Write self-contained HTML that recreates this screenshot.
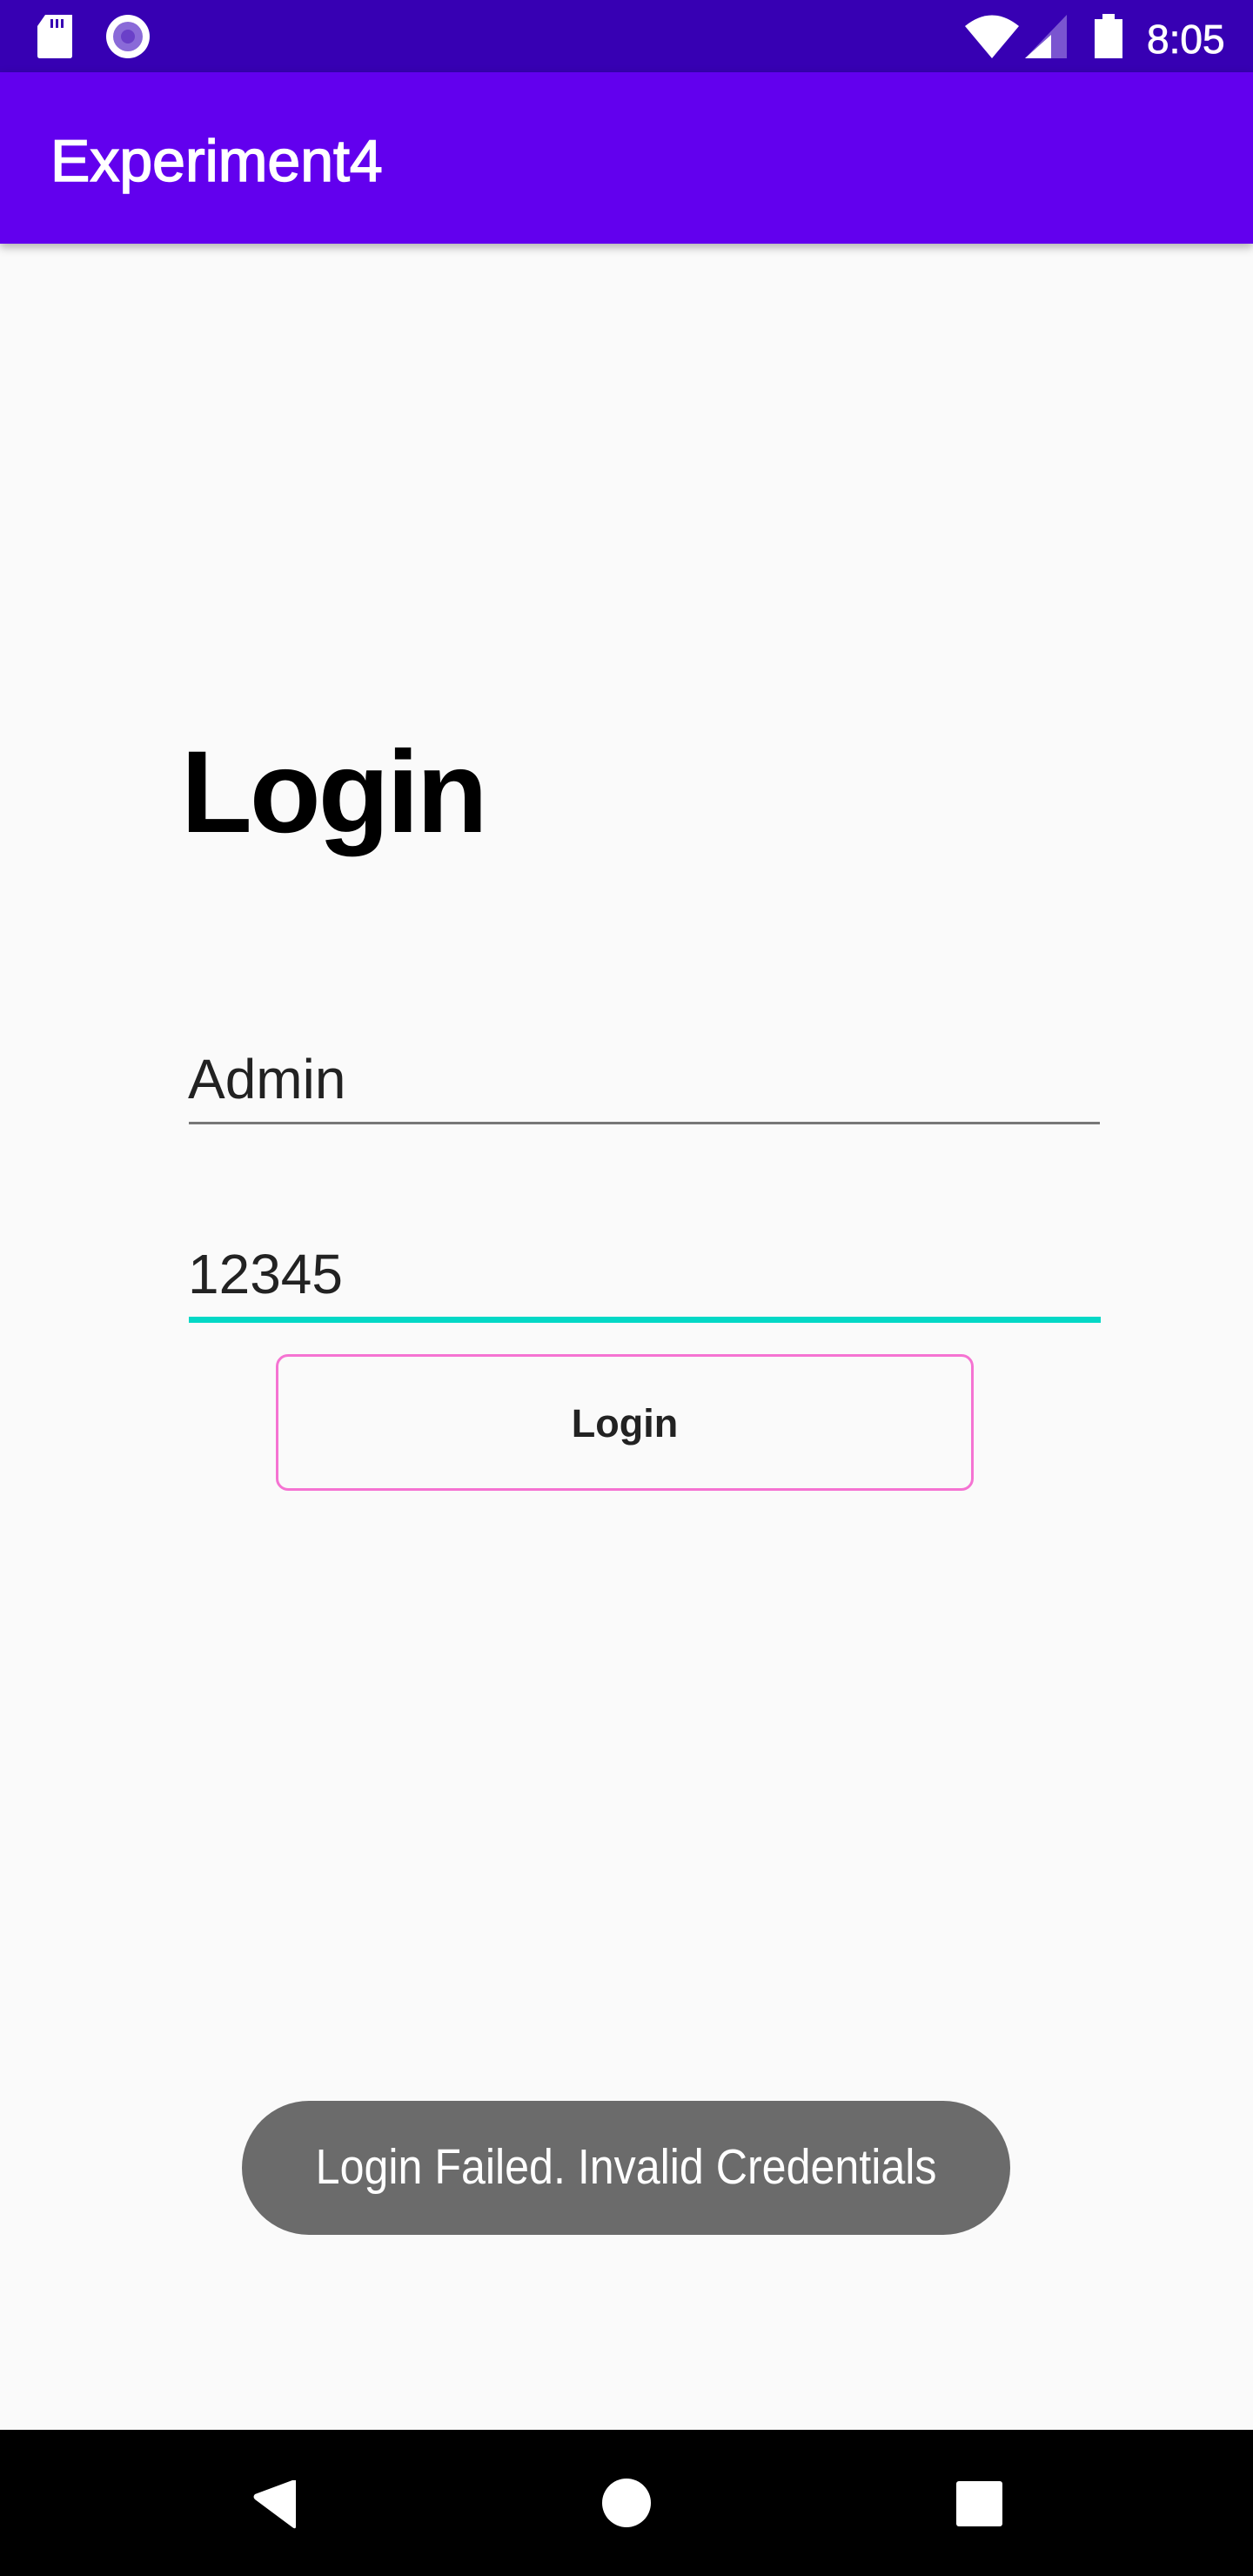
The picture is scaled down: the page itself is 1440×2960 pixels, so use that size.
<!DOCTYPE html>
<html><head><meta charset="utf-8"><style>
*{margin:0;padding:0;box-sizing:border-box}
body{width:1440px;height:2960px;background:#fafafa;font-family:"Liberation Sans",sans-serif;position:relative;overflow:hidden}
.abs{position:absolute}
</style></head><body>
<div class="abs" style="left:0;top:0;width:1440px;height:83px;background:#3700b3"></div>
<div class="abs" style="left:0;top:83px;width:1440px;height:197px;background:#6200ee;box-shadow:0 4px 10px rgba(0,0,0,0.3)"></div>
<svg class="abs" style="left:0;top:0" width="1440" height="83">
<path d="M52 17 H83 V64 Q83 67 80 67 H46 Q43 67 43 64 V30 Z" fill="#fff"/>
<rect x="58" y="22" width="3" height="10" fill="#3700b3"/><rect x="64" y="22" width="3" height="10" fill="#3700b3"/><rect x="70" y="22" width="3" height="10" fill="#3700b3"/>
<ellipse cx="147" cy="42" rx="25" ry="25" fill="#fff"/>
<ellipse cx="147" cy="42" rx="17" ry="17" fill="#8a6ad8"/>
<ellipse cx="147" cy="42" rx="8" ry="8" fill="#6a40c8"/>
<path d="M1109 30 Q1140 5 1171 30 L1140 67 Z" fill="#fff"/>
<path d="M1226 17 V67 H1178 Z" fill="#7a55d0"/>
<path d="M1208 40 V67 H1178 Z" fill="#fff"/>
<rect x="1258" y="22" width="32" height="45" fill="#fff"/><rect x="1267" y="16" width="14" height="7" fill="#fff"/>
<text x="1318" y="61" font-family="Liberation Sans" font-size="46" fill="#fff" stroke="#fff" stroke-width="0.8">8:05</text>
</svg>
<div class="abs" style="left:58px;top:145px;font-size:68px;color:#fff;line-height:80px;-webkit-text-stroke:1.5px #fff">Experiment4</div>
<div class="abs" style="left:208px;top:836px;font-size:134px;font-weight:bold;color:#000;letter-spacing:-3px;line-height:150px">Login</div>
<div class="abs" style="left:216px;top:1200px;font-size:64px;color:#222;line-height:80px">Admin</div>
<div class="abs" style="left:217px;top:1289px;width:1047px;height:3px;background:#777"></div>
<div class="abs" style="left:216px;top:1424px;font-size:64px;color:#222;line-height:80px">12345</div>
<div class="abs" style="left:217px;top:1513px;width:1048px;height:7px;background:#03d8c6"></div>
<div class="abs" style="left:317px;top:1556px;width:802px;height:157px;border:3px solid #f573d2;border-radius:14px;text-align:center;font-size:45px;font-weight:bold;color:#222;line-height:154px">Login</div>
<div class="abs" style="left:278px;top:2414px;width:883px;height:154px;background:#6b6b6b;border-radius:77px;text-align:center;line-height:152px"><span style="display:inline-block;font-size:57px;color:#fff;transform:scaleX(0.88)">Login Failed. Invalid Credentials</span></div>
<div class="abs" style="left:0;top:2792px;width:1440px;height:168px;background:#000"></div>
<svg class="abs" style="left:0;top:2792px" width="1440" height="168">
<path d="M340 58 V111 Q340 115 336 112 L293 80 Q290 77 293 74 L336 58 Z" fill="#fff"/>
<circle cx="720" cy="84" r="28" fill="#fff"/>
<rect x="1099" y="59" width="53" height="52" rx="3" fill="#fff"/>
</svg>
</body></html>
